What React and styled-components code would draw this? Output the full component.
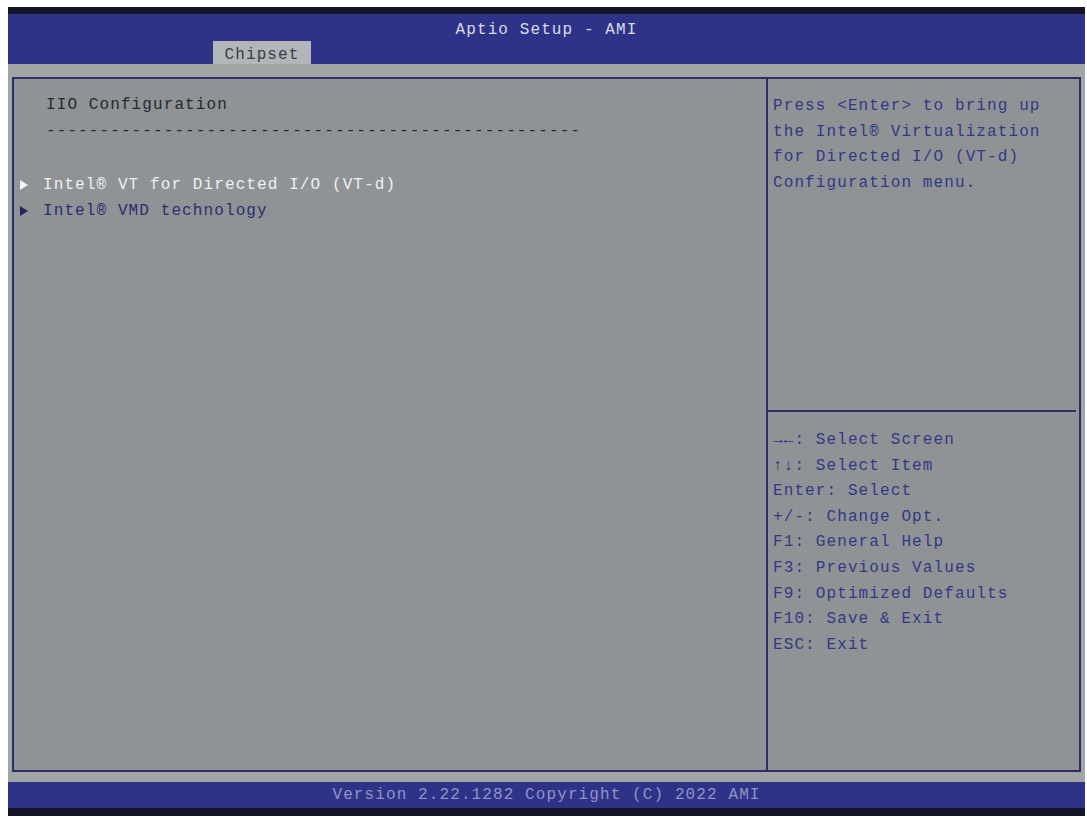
import styled, { createGlobalStyle } from 'styled-components';

const GlobalStyle = createGlobalStyle`
  html, body {
    margin: 0;
    padding: 0;
    background: #ffffff;
  }
  body {
    font-family: "Liberation Mono", "DejaVu Sans Mono", monospace;
  }
`;

const Page = styled.div`
  width: 1087px;
  height: 818px;
  padding: 7px 2px 2px 8px;
  box-sizing: border-box;
`;

const Screen = styled.div`
  display: flex;
  flex-direction: column;
  height: 809px;
  background: #a1a5a6;
  font-size: 16px;
  letter-spacing: 1.1px;
`;

const TopBand = styled.div`
  height: 7px;
  background: #15152a;
`;

const Header = styled.div`
  position: relative;
  height: 50px;
  background: #2f3388;
  display: flex;
  align-items: flex-end;
  padding-left: 205px;
`;

const Title = styled.div`
  position: absolute;
  left: 0;
  right: 0;
  top: 7px;
  text-align: center;
  color: #d9dbe9;
`;

const Tab = styled.div`
  width: 98px;
  height: 23px;
  padding-top: 5px;
  box-sizing: border-box;
  background: #b2b6b8;
  color: #3a3d4a;
  display: flex;
  align-items: center;
  justify-content: center;
`;

const Strip = styled.div`
  height: ${(p) => p.h}px;
`;

const Panels = styled.div`
  flex: 1;
  margin: 0 4px 0 4px;
  border: 2px solid #2c2f66;
  background: #8f9396;
  display: grid;
  grid-template-columns: 754px 1fr;
`;

const Main = styled.div`
  border-right: 2px solid #2c2f66;
  padding: 13px 0 0 0;
`;

const Heading = styled.div`
  padding-left: 32px;
  color: #262830;
  line-height: 26px;
`;

const Item = styled.div`
  display: flex;
  align-items: center;
  height: 26px;
  color: ${(p) => (p.active ? '#eef0f2' : '#2b2e6c')};
`;

const Arrow = styled.span`
  width: 0;
  height: 0;
  margin: 0 15px 0 6px;
  border-top: 5px solid transparent;
  border-bottom: 5px solid transparent;
  border-left: 8px solid ${(p) => (p.active ? '#f2f4f6' : '#25285a')};
`;

const Gap = styled.div`
  height: ${(p) => p.h}px;
`;

const Side = styled.div`
  display: grid;
  grid-template-rows: 333px 1fr;
`;

const Help = styled.div`
  padding: 15px 0 0 5px;
  line-height: 25.7px;
  color: #333884;
  border-bottom: 2px solid #2c2f66;
  margin-right: 3px;
`;

const Keys = styled.div`
  padding: 16px 0 0 5px;
  line-height: 25.6px;
  color: #333884;
`;

const Footer = styled.div`
  height: 26px;
  background: #2f3388;
  color: #8f94c6;
  text-align: center;
  line-height: 26px;
`;

const BottomBand = styled.div`
  height: 8px;
  background: #15152a;
`;

const keys = [
  '\u2192\u2190: Select Screen',
  '\u2191\u2193: Select Item',
  'Enter: Select',
  '+/-: Change Opt.',
  'F1: General Help',
  'F3: Previous Values',
  'F9: Optimized Defaults',
  'F10: Save & Exit',
  'ESC: Exit'
];

const App = () => {
  return (
    <Page>
      <GlobalStyle />
      <Screen>
        <TopBand />
        <Header>
          <Title>Aptio Setup - AMI</Title>
          <Tab>Chipset</Tab>
        </Header>
        <Strip h={13} />
        <Panels>
          <Main>
            <Heading>IIO Configuration</Heading>
            <Heading>{'-'.repeat(50)}</Heading>
            <Gap h={28} />
            <Item active>
              <Arrow active />
              Intel® VT for Directed I/O (VT-d)
            </Item>
            <Item>
              <Arrow />
              Intel® VMD technology
            </Item>
          </Main>
          <Side>
            <Help>
              Press &lt;Enter&gt; to bring up
              <br />
              the Intel® Virtualization
              <br />
              for Directed I/O (VT-d)
              <br />
              Configuration menu.
            </Help>
            <Keys>
              {keys.map((k) => (
                <div key={k}>{k}</div>
              ))}
            </Keys>
          </Side>
        </Panels>
        <Strip h={10} />
        <Footer>Version 2.22.1282 Copyright (C) 2022 AMI</Footer>
        <BottomBand />
      </Screen>
    </Page>
  );
};

export default App;
